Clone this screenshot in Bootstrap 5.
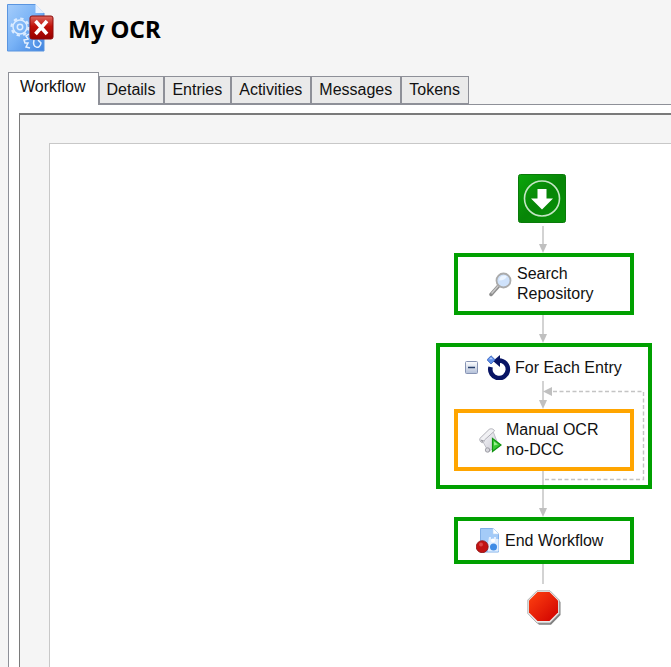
<!DOCTYPE html>
<html lang="en">
<head>
<meta charset="utf-8">
<meta name="viewport" content="width=device-width, initial-scale=1">
<title>My OCR</title>
<link href="https://cdn.jsdelivr.net/npm/bootstrap@5.3.0/dist/css/bootstrap.min.css" rel="stylesheet">
<style>
  body { background: #f5f5f5; color: #111; font-family: "Liberation Sans", Arial, sans-serif; font-size: 16px; line-height: 20px; }
  svg { display: block; flex: none; }
  .page-head { height: 72px; padding: 3px 7px 0; gap: 14px; }
  .page-head h1 { font: bold 24px/32px "Noto Sans", "Open Sans", sans-serif; color: #000; padding-top: 10px; }
  .flow-tabs { border: 0; padding-left: 8px; position: relative; }
  .flow-tabs .nav-link { background: #eaeaea; color: #111; border: 1px solid #8e9098; border-radius: 0; margin: 0; padding: 3px 8px 3px 7px; height: 28px; line-height: 20px; }
  .flow-tabs .nav-link.active { background: #fff; color: #111; border-color: #8e9098; border-bottom: 0; height: 33px; padding: 4px 12px 8px 11px; margin-bottom: -1px; }
  .tab-panel { margin-left: 8px; background: #fff; border: solid #8e9098; border-width: 1px 0 0 1px; padding: 8px 0 0 10px; }
  .frame { background: #f5f5f5; border: solid #7a7a7a; border-width: 2px 0 0 1px; padding: 28px 0 0 29px; }
  .sheet { background: #fff; border: solid #c8c8c8; border-width: 1px 0 0 1px; padding: 30px 0 0 386px; }
  .diagram { width: 216px; }
  .step { width: 180px; border: 4px solid #00a000; background: #fff; }
  .step-tall { height: 62px; }
  .step-end { height: 47px; gap: 6px; padding-left: 18px; }
  .step-search { gap: 5px; padding-left: 31px; }
  .step-manual { border-color: #ffa500; gap: 4px; padding-left: 21px; }
  .loop { width: 216px; height: 146px; border: 4px solid #00a000; position: relative; }
  .loop-head { height: 34px; padding: 7px 0 0 25px; }
  .loop-head button { width: 13px; height: 13px; margin-right: 9px; }
  .loop-head span { margin-left: 4px; white-space: nowrap; }
  .return-path { position: absolute; left: 101px; top: 38px; z-index: 1; }
</style>
<script src="https://cdn.jsdelivr.net/npm/bootstrap@5.3.0/dist/js/bootstrap.bundle.min.js"></script>
</head>
<body class="min-vh-100 d-flex flex-column overflow-hidden">
<header class="page-head d-flex align-items-start">
  <svg width="47" height="49" viewBox="0 0 47 49" aria-hidden="true">
    <defs>
      <linearGradient id="paper" x1="0" y1="0" x2="1" y2="1"><stop offset="0" stop-color="#a5cdfb"/><stop offset=".5" stop-color="#78b2f6"/><stop offset="1" stop-color="#3f83df"/></linearGradient>
      <linearGradient id="redbox" x1="0" y1="0" x2="0" y2="1"><stop offset="0" stop-color="#dd6a62"/><stop offset=".45" stop-color="#c01008"/><stop offset="1" stop-color="#960000"/></linearGradient>
    </defs>
    <path d="M.5 1.500h28l8.500 8.500v38H.5z" fill="url(#paper)" stroke="#5a95e0"/>
    <path d="M28.500 1l9 9h-9z" fill="#e6f1ff"/>
    <circle cx="13" cy="24" r="7" fill="none" stroke="#dcecff" stroke-width="1.500"/>
    <circle cx="13" cy="24" r="8.500" fill="none" stroke="#dcecff" stroke-width="2.200" stroke-dasharray="3.300 3.370"/>
    <circle cx="13" cy="24" r="2.700" fill="none" stroke="#dcecff" stroke-width="1.500"/>
    <path d="M22 31l-3 2 2 3-4 1 1 3h3l-2 4 4 1M27 37c-2 8 6 10 7 3l-3-3" fill="none" stroke="#e6f1ff" stroke-width="1.500"/>
    <rect x="23" y="13" width="23" height="23" rx="2" fill="url(#redbox)" stroke="#8c0c0c"/>
    <path d="M28.500 18L40 31M40 18L28.500 31" stroke="#fff" stroke-width="3.600"/>
  </svg>
  <h1 class="m-0">My OCR</h1>
</header>

<ul class="nav nav-tabs flow-tabs align-items-end flex-nowrap" role="tablist">
  <li class="nav-item" role="presentation"><button type="button" class="nav-link active" role="tab" aria-selected="true">Workflow</button></li>
  <li class="nav-item" role="presentation"><button type="button" class="nav-link" role="tab" aria-selected="false">Details</button></li>
  <li class="nav-item" role="presentation"><button type="button" class="nav-link" role="tab" aria-selected="false">Entries</button></li>
  <li class="nav-item" role="presentation"><button type="button" class="nav-link" role="tab" aria-selected="false">Activities</button></li>
  <li class="nav-item" role="presentation"><button type="button" class="nav-link" role="tab" aria-selected="false">Messages</button></li>
  <li class="nav-item" role="presentation"><button type="button" class="nav-link" role="tab" aria-selected="false">Tokens</button></li>
</ul>

<main class="tab-panel flex-grow-1 d-flex flex-column">
  <div class="frame flex-grow-1 d-flex flex-column">
    <div class="sheet flex-grow-1">
      <div class="diagram d-flex flex-column align-items-center">
        <svg width="52" height="49" viewBox="0 0 52 49" role="img" aria-label="Start">
          <defs><linearGradient id="green" x1="0" y1="0" x2="1" y2="1"><stop offset="0" stop-color="#0ba60b"/><stop offset=".5" stop-color="#078507"/><stop offset="1" stop-color="#079407"/></linearGradient></defs>
          <rect x=".5" y=".5" width="47" height="48" rx="2" fill="url(#green)" stroke="#0a7a0a"/>
          <circle cx="24" cy="24.500" r="17.500" fill="none" stroke="#c4e6c4" stroke-width="1.600"/>
          <path d="M19.500 15h9v9.500H35L24 35.500 13 24.500h6.500z" fill="#fff"/>
        </svg>
        <svg width="10" height="30" viewBox="0 0 10 30" aria-hidden="true"><path d="M4 3v19" stroke="#c4c4c4" stroke-width="1.500"/><path d="M0 21h8L4 30z" fill="#c0c0c0"/></svg>

        <div class="step step-tall step-search d-flex align-items-center">
          <svg width="23" height="25" viewBox="0 0 23 25" aria-hidden="true">
            <path d="M2 22.500l8-9" stroke="#8d8d8d" stroke-width="3.500" stroke-linecap="round"/>
            <path d="M2.500 21.500l7-8" stroke="#c9c9c9" stroke-width="1.500"/>
            <circle cx="14.500" cy="8.500" r="7" fill="#cfe2fb" stroke="#ababab" stroke-width="1.800"/>
            <path d="M10 8.500a5 5 0 0 1 8-4q-2 4-8 4z" fill="#edf5ff"/>
          </svg>
          <span>Search<br>Repository</span>
        </div>
        <svg width="10" height="28" viewBox="0 0 10 28" aria-hidden="true"><path d="M4 0v20" stroke="#c4c4c4" stroke-width="1.500"/><path d="M0 19h8L4 28z" fill="#c0c0c0"/></svg>

        <section class="loop d-flex flex-column align-items-center">
          <div class="loop-head w-100 d-flex align-items-center">
            <button type="button" class="border-0 p-0 bg-transparent" aria-label="Collapse For Each Entry">
              <svg width="13" height="13" viewBox="0 0 13 13"><defs><linearGradient id="fold" x1="0" y1="0" x2="0" y2="1"><stop offset="0" stop-color="#fff"/><stop offset="1" stop-color="#b2bfd8"/></linearGradient></defs><rect x=".5" y=".5" width="12" height="12" rx="1" fill="url(#fold)" stroke="#8794b4"/><path d="M3 6.500h7" stroke="#28406c" stroke-width="1.500"/></svg>
            </button>
            <svg width="24" height="25" viewBox="0 0 24 25" aria-hidden="true">
              <path d="M3.600 12A8.800 8.800 0 1 0 12 5.500" fill="none" stroke="#081464" stroke-width="4.600"/>
              <path d="M13 0v12L6 6z" fill="#081464"/>
              <path d="M4 .8l4.200 4L4 9 0 4.800z" fill="#5f8fe8" stroke="#2a55b4" stroke-width=".7"/>
              <path d="M4 2.300l2 2H2z" fill="#b5d0ff"/>
            </svg>
            <span>For Each Entry</span>
          </div>
          <svg width="10" height="28" viewBox="0 0 10 28" aria-hidden="true"><path d="M4 0v20" stroke="#c4c4c4" stroke-width="1.500"/><path d="M0 19h8L4 28z" fill="#c0c0c0"/></svg>
          <div class="step step-tall step-manual d-flex align-items-center">
            <svg width="23" height="25" viewBox="0 0 23 25" aria-hidden="true">
              <defs><linearGradient id="scroll" x1="0" y1="0" x2="1" y2="1"><stop offset="0" stop-color="#fafafc"/><stop offset="1" stop-color="#c4c4cf"/></linearGradient></defs>
              <path d="M3 12L12 3.500l2.500 1L19 16 9.500 24z" fill="url(#scroll)" stroke="#b4b4bd" stroke-width=".8"/>
              <path d="M.8 10.500L10 1.500c2-1.500 5-.5 5.500 1.500L5.500 12c-.5 2.500-2 3-3 2.500S.5 12.500.8 10.500z" fill="#f1f1f4" stroke="#a9a9b1" stroke-width=".9"/>
              <path d="M1.500 11.500l3.500 1-2 2z" fill="#9a9aa2"/>
              <circle cx="8.500" cy="22" r="2.200" fill="#d6d6dc" stroke="#8f8f98" stroke-width=".8"/>
              <path d="M13.500 10.500L22 17l-8.500 6.500z" fill="#39c935" stroke="#109410" stroke-width="1.200"/>
              <path d="M15 13.500l4 3-4 1z" fill="#9af08f"/>
            </svg>
            <span>Manual OCR<br>no-DCC</span>
          </div>
          <svg width="10" height="14" viewBox="0 0 10 14" aria-hidden="true"><path d="M4 0v14" stroke="#c4c4c4" stroke-width="1.500"/></svg>
          <svg class="return-path" width="105" height="98" viewBox="0 0 105 98" aria-hidden="true"><path d="M12 6.500h90.500v88H2" fill="none" stroke="#c4c4c4" stroke-width="1.400" stroke-dasharray="4 2.500"/><path d="M2 6.500l9-4.500v9z" fill="#c0c0c0"/></svg>
        </section>
        <svg width="10" height="28" viewBox="0 0 10 28" aria-hidden="true"><path d="M4 0v20" stroke="#c4c4c4" stroke-width="1.500"/><path d="M0 19h8L4 28z" fill="#c0c0c0"/></svg>

        <div class="step step-end d-flex align-items-center">
          <svg width="23" height="25" viewBox="0 0 23 25" aria-hidden="true">
            <path d="M4.500.5h13l5 5v18.500h-18z" fill="#a4cbf8" stroke="#82b0e8"/>
            <path d="M17 0l6 6h-6z" fill="#fff" stroke="#b8d3f2" stroke-width=".6"/>
            <path d="M13 9h2v2h3V9h2v2h2.500v12.500H12V15z" fill="#e2efff"/>
            <circle cx="17.500" cy="19" r="3.500" fill="#3f8be5"/><circle cx="17" cy="12.500" r="2" fill="#fff"/>
            <circle cx="6.200" cy="18.700" r="6" fill="#c21313" stroke="#8b1010" stroke-width=".8"/>
            <circle cx="5" cy="16.500" r="2" fill="#dc4545"/>
          </svg>
          <span>End Workflow</span>
        </div>
        <svg width="10" height="26" viewBox="0 0 10 26" aria-hidden="true"><path d="M4 0v20" stroke="#c4c4c4" stroke-width="1.500"/></svg>
        <svg width="36" height="36" viewBox="0 0 36 36" role="img" aria-label="Stop">
          <defs><linearGradient id="stop" x1="0" y1="0" x2="1" y2="1"><stop offset="0" stop-color="#ff4210"/><stop offset="1" stop-color="#cf0000"/></linearGradient></defs>
          <path d="M12 2.500h13L34.500 12v13l-9.500 9.800H13l-9-9V11z" fill="#555" opacity=".75"/>
          <path d="M11 .8h13L33.200 10v13.500L24 33H11L1.800 23.500V10z" fill="#ececec" stroke="#a5a5a5" stroke-width=".8"/>
          <path d="M11.500 2h12l8.500 8.500v12L23.500 31h-12L3 22.500v-12z" fill="url(#stop)"/>
        </svg>
      </div>
    </div>
  </div>
</main>
</body>
</html>
